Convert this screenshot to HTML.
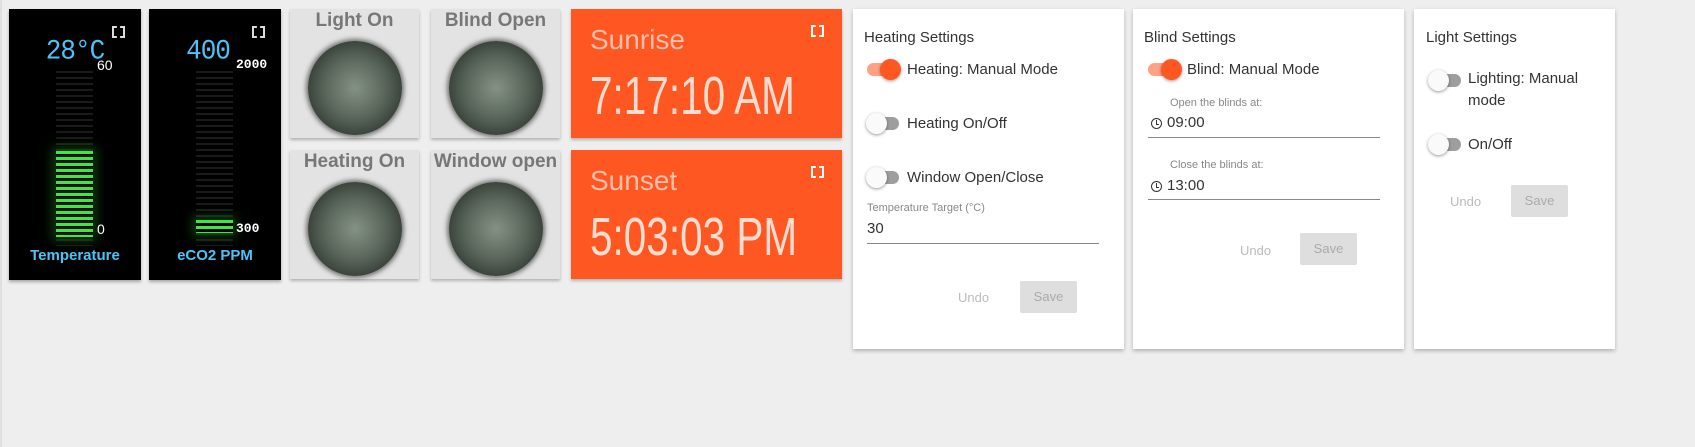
<!DOCTYPE html><html><head><style>
body{margin:0;width:1695px;height:447px;background:#eeeeee;font-family:"Liberation Sans",sans-serif;position:relative;overflow:hidden}
.a{position:absolute}
.g{background:#000;top:9px;height:271px;width:132px;box-shadow:0 2px 3px rgba(0,0,0,.3)}
.lcd{position:absolute;width:100%;text-align:center;top:27px;font:26px "Liberation Mono",monospace;color:#4fc3f7;letter-spacing:-1px;transform:scaleY(1.05)}
.ex{position:absolute;width:9px;height:8px;top:17px;right:16px;border:2px dashed #ddd}
.bars{position:absolute;width:37px;top:62px;height:175px;background:repeating-linear-gradient(#1a1a1a 0 2px,transparent 2px 6px)}
.gr{position:absolute;width:37px;background:repeating-linear-gradient(#3ee83e 0 3px,transparent 3px 6px);box-shadow:0 0 10px 4px rgba(40,160,40,.35)}
.num{position:absolute;color:#fff;font-size:14px}
.lab{position:absolute;width:100%;text-align:center;top:238px;color:#4fc3f7;font-weight:bold;font-size:15px}
.ind{background:#e3e3e3;width:129px;height:129px;box-shadow:0 2px 3px rgba(0,0,0,.25)}
.ind .t{text-align:center;color:#777;font-size:19px;font-weight:bold;margin-top:1px;white-space:nowrap}
.ball{position:absolute;left:18px;top:32px;width:94px;height:94px;border-radius:50%;background:radial-gradient(circle at 50% 50%,#849284 0%,#5a665b 45%,#363f37 75%,#1a1f1a 100%);box-shadow:0 0 5px 2px rgba(20,20,20,.55)}
.sun{background:#ff5722;left:571px;width:271px;height:129px;box-shadow:0 2px 3px rgba(0,0,0,.25);overflow:hidden}
.sun .h{position:absolute;left:19px;top:15px;font-size:28px;color:#ffbfa8}
.sun .v{position:absolute;left:19px;top:56px;font-size:54px;color:rgba(255,240,232,.88);font-weight:normal;white-space:nowrap;transform:scaleX(.75);transform-origin:0 0}
.sun .ex{border-color:#fff;top:16px;right:18px}
.card{background:#fff;top:9px;height:340px;box-shadow:0 2px 4px rgba(0,0,0,.25)}
.ttl{position:absolute;top:20px;font-size:15px;color:#333}
.tg{position:absolute;width:32px;height:13px;border-radius:7px;background:#9e9e9e}
.tg i{position:absolute;top:-4px;left:-1px;width:21px;height:21px;border-radius:50%;background:#fafafa;box-shadow:0 1px 3px rgba(0,0,0,.4)}
.tg.on{background:#ffa184}.tg.on i{left:13px;background:#ff5722}
.tx{position:absolute;font-size:15px;color:#333}
.sm{position:absolute;font-size:11px;color:#888}
.ln{position:absolute;height:1px;background:#888}
.undo{position:absolute;font-size:13px;color:#bbb}
.save{position:absolute;background:#dedede;border-radius:2px;color:#aaa;font-size:13px;text-align:center;line-height:32px;width:57px;height:32px}
.clk{position:absolute;width:9px;height:9px;border:1.5px solid #333;border-radius:50%}
.clk:after{content:"";position:absolute;left:4px;top:1px;width:2px;height:4px;border-left:1.3px solid #333;border-bottom:1.3px solid #333}
</style></head><body>
<div class="a" style="left:0;top:0;width:2px;height:447px;background:#e0e0e0"></div>
<div class="a g" style="left:9px"><div class="lcd">28°C</div><div class="ex"></div>
<div class="bars" style="left:47px"></div><div class="gr" style="left:47px;top:142px;height:86px"></div>
<div class="num" style="left:88px;top:48px">60</div><div class="num" style="left:88px;top:212px">0</div><div class="lab">Temperature</div></div>
<div class="a g" style="left:149px"><div class="lcd" style="left:-7px">400</div><div class="ex"></div>
<div class="bars" style="left:47px"></div><div class="gr" style="left:47px;top:211px;height:13px"></div>
<div class="num" style="left:87px;top:48px;font-family:'Liberation Mono',monospace;font-weight:bold;font-size:13px">2000</div><div class="num" style="left:87px;top:212px;font-family:'Liberation Mono',monospace;font-weight:bold;font-size:13px">300</div><div class="lab">eCO2 PPM</div></div>
<div class="a ind" style="left:290px;top:9px"><div class="t">Light On</div><div class="ball"></div></div>
<div class="a ind" style="left:431px;top:9px"><div class="t">Blind Open</div><div class="ball"></div></div>
<div class="a ind" style="left:290px;top:150px"><div class="t">Heating On</div><div class="ball"></div></div>
<div class="a ind" style="left:431px;top:150px"><div class="t">Window open</div><div class="ball"></div></div>
<div class="a sun" style="top:9px"><div class="h">Sunrise</div><div class="v">7:17:10 AM</div><div class="ex"></div></div>
<div class="a sun" style="top:150px"><div class="h">Sunset</div><div class="v">5:03:03 PM</div><div class="ex"></div></div>

<div class="a card" style="left:853px;width:271px">
<div class="ttl" style="left:11px">Heating Settings</div>
<div class="tg on" style="left:14px;top:54px"><i></i></div><div class="tx" style="left:54px;top:52px">Heating: Manual Mode</div>
<div class="tg" style="left:14px;top:108px"><i></i></div><div class="tx" style="left:54px;top:106px">Heating On/Off</div>
<div class="tg" style="left:14px;top:162px"><i></i></div><div class="tx" style="left:54px;top:160px">Window Open/Close</div>
<div class="sm" style="left:14px;top:193px">Temperature Target (°C)</div>
<div class="tx" style="left:14px;top:211px">30</div><div class="ln" style="left:14px;top:234px;width:232px"></div>
<div class="undo" style="left:105px;top:281px">Undo</div><div class="save" style="left:167px;top:272px">Save</div></div>

<div class="a card" style="left:1133px;width:271px">
<div class="ttl" style="left:11px">Blind Settings</div>
<div class="tg on" style="left:15px;top:54px"><i></i></div><div class="tx" style="left:54px;top:52px">Blind: Manual Mode</div>
<div class="sm" style="left:37px;top:88px">Open the blinds at:</div>
<div class="clk" style="left:18px;top:109px"></div><div class="tx" style="left:34px;top:105px">09:00</div><div class="ln" style="left:15px;top:128px;width:232px"></div>
<div class="sm" style="left:37px;top:150px">Close the blinds at:</div>
<div class="clk" style="left:18px;top:172px"></div><div class="tx" style="left:34px;top:168px">13:00</div><div class="ln" style="left:15px;top:190px;width:232px"></div>
<div class="undo" style="left:107px;top:234px">Undo</div><div class="save" style="left:167px;top:224px">Save</div></div>

<div class="a card" style="left:1414px;width:201px">
<div class="ttl" style="left:12px">Light Settings</div>
<div class="tg" style="left:15px;top:65px"><i></i></div><div class="tx" style="left:54px;top:59px;line-height:22px">Lighting: Manual<br>mode</div>
<div class="tg" style="left:15px;top:129px"><i></i></div><div class="tx" style="left:54px;top:127px">On/Off</div>
<div class="undo" style="left:36px;top:185px">Undo</div><div class="save" style="left:97px;top:176px">Save</div></div>
</body></html>
